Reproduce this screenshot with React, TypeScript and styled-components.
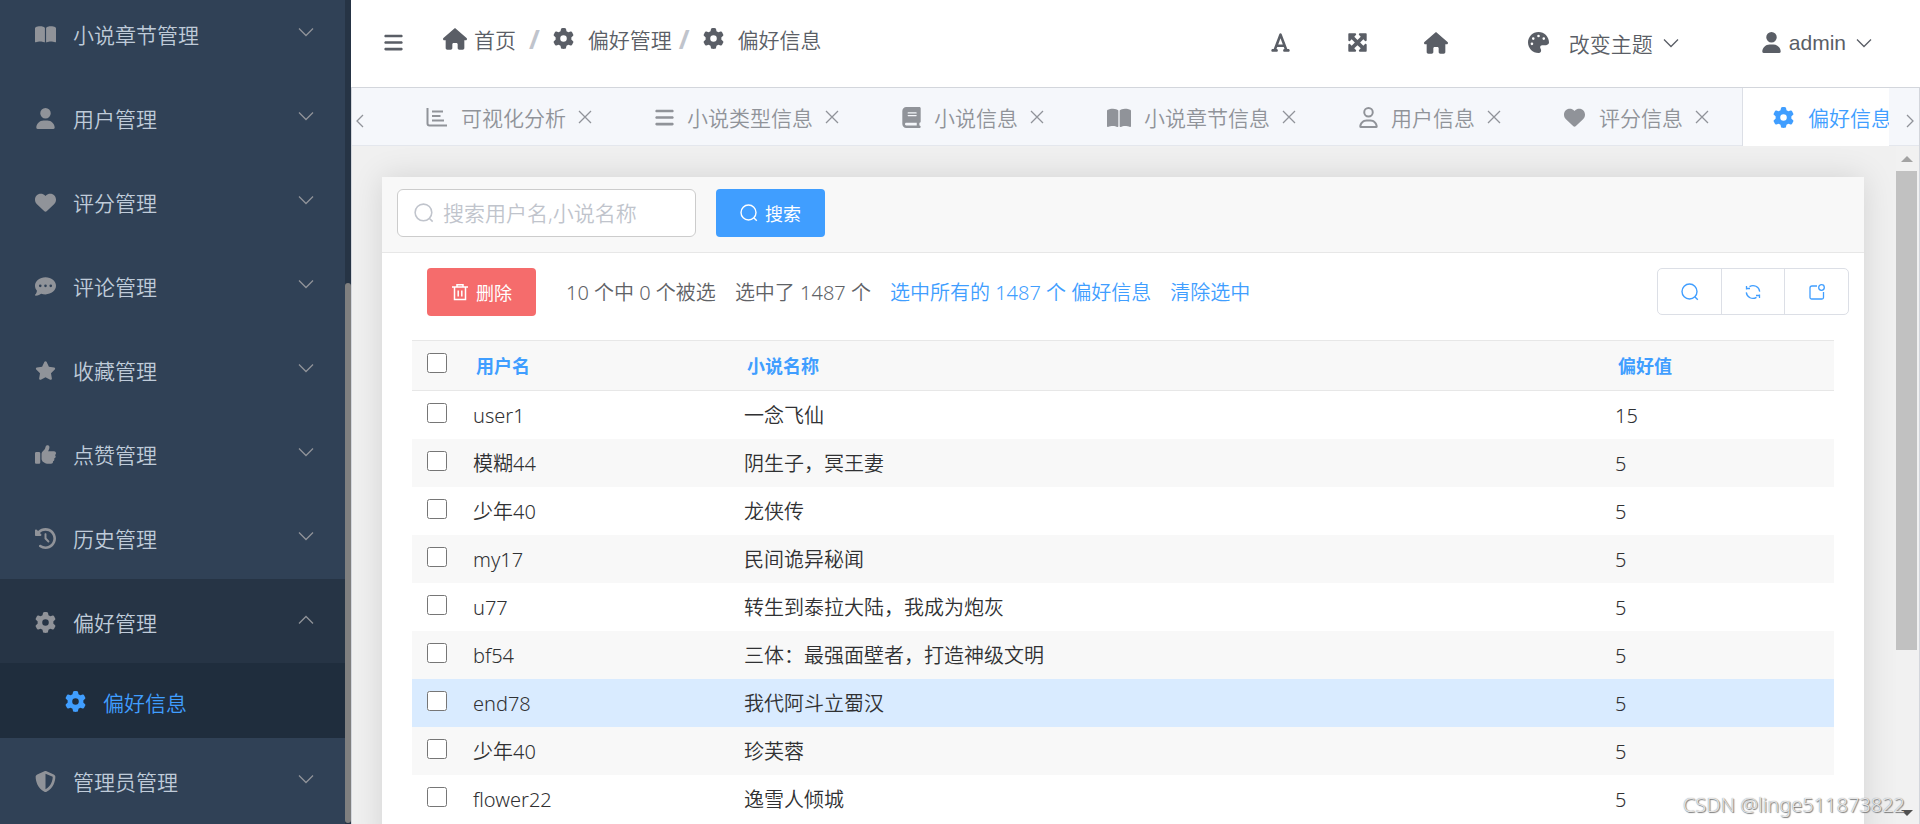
import React from 'react';
import styled, { createGlobalStyle, css } from 'styled-components';
import {
  FaBars, FaBook, FaBookOpen, FaClockRotateLeft, FaCommentDots, FaFont, FaGear, FaHeart,
  FaHouse, FaMaximize, FaPalette, FaRegUser, FaShieldHalved, FaStar, FaThumbsUp, FaUser,
} from 'react-icons/fa6';

const sans = '"Liberation Sans", "Noto Sans CJK SC", sans-serif';
const ui = '"Noto Sans", "Noto Sans CJK SC", sans-serif';

const Global = createGlobalStyle`
  *, *::before, *::after { box-sizing: border-box; }
  body { margin: 0; overflow: hidden; font-family: ${sans}; font-weight: 350; }
  button, input { font: inherit; margin: 0; }
  a { color: inherit; text-decoration: none; }
  svg { display: block; flex: none; }
`;

const Shell = styled.div`
  display: flex;
  height: 100vh;
  overflow: hidden;
`;

/* Sidebar */
const Sidebar = styled.aside`
  display: flex;
  flex: none;
  width: 351px;
  background: #304156;
`;
const Menu = styled.nav`
  flex: 1;
  height: 100vh;
  overflow: hidden;
`;
const MenuList = styled.div`
  margin-top: -9px;
`;
const MenuItem = styled.button<{ $open?: boolean }>`
  display: flex;
  align-items: center;
  width: 100%;
  height: 84px;
  padding: 2px 29px 0 30px;
  border: 0;
  background: ${p => (p.$open ? '#263445' : 'transparent')};
  color: #bfcbd9;
  font-size: 21px;
  text-align: left;
  cursor: pointer;
`;
const MenuIcon = styled.span`
  display: flex;
  justify-content: center;
  width: 30px;
  margin-right: 13px;
  color: #909399;
  font-size: 21px;
`;
const MenuArrow = styled.span`
  margin-left: auto;
  padding-bottom: 4px;
  color: #909399;
`;
const SubItem = styled.a`
  display: flex;
  align-items: center;
  height: 75px;
  padding: 2px 0 0 60px;
  background: #1f2d3d;
  color: #409eff;
  font-size: 21px;
  ${MenuIcon} { color: inherit; }
`;
const SideTrack = styled.div`
  display: flex;
  flex-direction: column;
  justify-content: flex-end;
  width: 6px;
  padding-bottom: 1px;
  background: #263445;
`;
const SideThumb = styled.div`
  height: 65.6%;
  border-radius: 3px;
  background: #7f7f7f;
`;

/* Header */
const Main = styled.div`
  display: flex;
  flex: 1;
  flex-direction: column;
  min-width: 0;
`;
const TopBar = styled.header`
  display: flex;
  flex: none;
  align-items: center;
  height: 87px;
  padding: 0 46px 2px 32px;
  background: #fff;
  color: #5a5e66;
  font-size: 21px;
`;
const IconButton = styled.button`
  display: flex;
  padding: 0;
  border: 0;
  background: none;
  color: inherit;
  cursor: pointer;
`;
const Crumbs = styled.nav`
  display: flex;
  align-items: center;
  height: 32px;
  margin: 0 0 8px 39px;
`;
const Crumb = styled.a<{ $gap: number }>`
  display: flex;
  align-items: center;
  gap: ${p => p.$gap}px;
`;
const Slash = styled.span<{ $before: number }>`
  margin: 0 13px 0 ${p => p.$before}px;
  color: #c0c4cc;
  font-family: ${ui};
  font-weight: 700;
  font-size: 26px;
`;
const Tools = styled.div`
  display: flex;
  align-items: center;
  margin-left: auto;
`;
const ToolIcons = styled.div`
  display: flex;
  align-items: center;
  gap: 56px;
`;
const Dropdown = styled.button<{ $gap: number }>`
  display: flex;
  align-items: center;
  gap: ${p => p.$gap}px;
  margin-left: 80px;
  padding: 0;
  border: 0;
  background: none;
  color: inherit;
  cursor: pointer;
`;
const DropdownLabel = styled.span`
  display: flex;
  align-items: center;
  gap: 8px;
`;

/* Tabs */
const TabFrame = styled.section`
  display: flex;
  flex: 1;
  flex-direction: column;
  min-height: 0;
  border: solid #d3d6dc;
  border-width: 1px 1px 0 1px;
`;
const TabBar = styled.div`
  display: flex;
  flex: none;
  height: 58px;
  border-bottom: 1px solid #e4e7ed;
  background: #f5f7fb;
  color: #909399;
`;
const TabScroll = styled.button`
  display: flex;
  flex: none;
  align-items: center;
  justify-content: center;
  width: 30px;
  padding: 8px 14px 0 0;
  border: 0;
  background: none;
  color: inherit;
  &:last-child { padding: 8px 0 0 11px; }
`;
const TabWindow = styled.div`
  display: flex;
  flex: 1;
  min-width: 0;
  height: 59px;
  padding-left: 14px;
  overflow: hidden;
`;
const Tab = styled.div<{ $active?: boolean }>`
  display: flex;
  flex: none;
  align-items: center;
  padding: 0 30px 2px;
  font-size: 21px;
  ${p => p.$active && css`
    border-left: 1px solid #dcdfe6;
    background: #fff;
    color: #409eff;
  `}
`;
const TabLink = styled.a`
  display: flex;
  align-items: center;
  gap: 14px;
  white-space: nowrap;
`;
const TabClose = styled.button`
  display: flex;
  justify-content: center;
  width: 21px;
  margin-left: 8px;
  padding: 0;
  border: 0;
  background: none;
  color: inherit;
`;

/* Content */
const Content = styled.div`
  display: flex;
  flex: 1;
  min-height: 0;
  background: #f0f0f0;
`;
const Scroller = styled.div`
  flex: 1;
  min-width: 0;
  padding: 31px 32px 0 30px;
  overflow: hidden;
`;
const Card = styled.main`
  background: #fff;
  box-shadow: 0 0 30px rgba(0, 0, 0, 0.12);
  font-family: ${ui};
`;
const SearchBar = styled.form`
  display: flex;
  gap: 20px;
  padding: 12px 15px 15px;
  border-bottom: 1px solid #e7e7e7;
  background: #f8f8f8;
`;
const SearchField = styled.label`
  display: flex;
  align-items: center;
  gap: 9px;
  width: 299px;
  height: 48px;
  padding: 0 16px;
  border: 1px solid #ccc;
  border-radius: 6px;
  background: #fff;
  color: #c0c4cc;
`;
const SearchInput = styled.input`
  flex: 1;
  min-width: 0;
  padding: 0;
  border: 0;
  outline: 0;
  background: none;
  color: #606266;
  font-size: 21px;
  &::placeholder { color: #c0c4cc; opacity: 1; }
`;
const SolidButton = styled.button<{ $tone: string }>`
  display: flex;
  align-items: center;
  justify-content: center;
  gap: 7px;
  width: 109px;
  height: 48px;
  padding: 0;
  border: 0;
  border-radius: 4px;
  background: ${p => p.$tone};
  color: #fff;
  font-size: 18px;
  font-weight: 400;
  cursor: pointer;
`;
const ActionBar = styled.div`
  display: flex;
  align-items: center;
  gap: 24px;
  padding: 15px 15px 24px 45px;
  color: #606266;
  font-size: 20px;
`;
const Counts = styled.div`
  display: flex;
  gap: 19px;
  padding: 0 0 2px 6px;
  white-space: nowrap;
`;
const ActionLink = styled.a`
  color: #409eff;
`;
const ToolGroup = styled.div`
  display: flex;
  align-self: flex-start;
  height: 47px;
  margin-left: auto;
  border: 1px solid #dcdfe6;
  border-radius: 5px;
`;
const ToolButton = styled.button`
  display: flex;
  align-items: center;
  justify-content: center;
  width: 63px;
  padding: 0;
  border: 0;
  background: none;
  color: #409eff;
  & + & { border-left: 1px solid #dcdfe6; }
  &:last-child { width: 64px; }
`;

/* Table */
const TableWrap = styled.div`
  padding: 0 30px 30px;
`;
const Table = styled.table`
  width: 100%;
  table-layout: fixed;
  border-collapse: separate;
  border-spacing: 0;
  color: #303133;
  font-size: 20px;
`;
const Col = styled.col<{ $width?: number }>`
  width: ${p => (p.$width ? `${p.$width}px` : 'auto')};
`;
const HeadCell = styled.th`
  height: 51px;
  padding: 0 0 2px 15px;
  border: solid #e7e7e7;
  border-width: 1px 0;
  background: #f8f8f8;
  color: #409eff;
  font-size: 18px;
  font-weight: 700;
  text-align: left;
  &:first-child { padding: 0 0 0 15px; }
`;
const Cell = styled.td`
  height: 48px;
  padding: 2px 0 0 12px;
  line-height: 28px;
  &:first-child { padding: 0 0 0 15px; }
`;
const Row = styled.tr<{ $hover?: boolean }>`
  background: ${p => (p.$hover ? '#d9ebff' : '#fff')};
  &:nth-child(even) { background: #f8f8f8; }
`;
const Check = styled.input`
  display: block;
  width: 20px;
  height: 20px;
  margin-bottom: 5px;
`;

/* Page scrollbar */
const PageTrack = styled.div`
  display: flex;
  flex: none;
  flex-direction: column;
  align-items: center;
  width: 23px;
  padding: 10px 2px 8px 0;
  background: #f1f1f1;
`;
const ThumbArea = styled.div`
  flex: 1;
  width: 100%;
  margin: 9px 0;
`;
const PageThumb = styled.div`
  height: 76%;
  background: #c1c1c1;
`;
const Watermark = styled.div`
  position: absolute;
  right: 15px;
  bottom: 6px;
  color: rgba(255, 255, 255, 0.8);
  font-family: ${ui};
  font-size: 20px;
  text-shadow: 1px 1px 1px #777, 0 0 1px #777;
`;

type LineProps = { size?: number; width?: number; d: string; stroke?: number };
const Line = ({ size = 24, width = 24, d, stroke = 1 }: LineProps) => (
  <svg width={width} height={width} viewBox={`0 0 ${size} ${size}`} fill="none" stroke="currentColor" strokeWidth={stroke} aria-hidden>
    <path d={d} />
  </svg>
);
const Down = () => <Line size={20} width={20} d="M3 6.5 10 13.500l7-7" stroke={1.3} />;
const Up = () => <Line size={20} width={20} d="M3 13.500 10 6.500l7 7" stroke={1.3} />;
const Close = () => <Line size={14} width={14} d="M1 1l12 12M13 1 1 13" stroke={1.3} />;
const Search = ({ width = 18 }: { width?: number }) => (
  <Line size={18} width={width} d="M16 8.500a7.500 7.500 0 1 1-15 0a7.500 7.500 0 0 1 15 0M14 14l2.800 2.800" stroke={1.4} />
);
const Trash = () => <Line size={18} width={18} d="M1 4h16M6 4V1.800h6V4M3.500 4v12.500h11V4M7.200 7.500v6M10.800 7.500v6" stroke={1.5} />;
const Refresh = () => (
  <Line size={18} width={18} d="M2.500 6.500V3M2 5.500h4M5.500 3.600A6.700 6.700 0 0 1 15.700 8.600M15.500 11.500V15M16 12.500h-4M12.500 14.400A6.700 6.700 0 0 1 2.300 9.400" stroke={1.3} />
);
const Popout = () => (
  <Line size={18} width={18} d="M9 3H4Q2 3 2 5v9.500q0 1.500 1.500 1.500H14q1.500 0 1.500-1.500V9M16.300 4.500a2.800 2.800 0 1 1-5.600 0a2.800 2.800 0 0 1 5.600 0" stroke={1.3} />
);
const BarChart = () => (
  <Line size={22} width={22} d="M1.500 1v15.500q0 2 2 2H21M6 4.500h11M6 9h8.500M6 13.500h12" stroke={2} />
);
const Triangle = ({ up }: { up?: boolean }) => (
  <svg width="12" height="6" viewBox="0 0 12 6" fill={up ? '#a3a3a3' : '#505050'} aria-hidden>
    <path d={up ? 'M0 6 6 0l6 6z' : 'M0 0h12L6 6z'} />
  </svg>
);

const menu = [
  { label: '小说章节管理', icon: <FaBookOpen /> },
  { label: '用户管理', icon: <FaUser /> },
  { label: '评分管理', icon: <FaHeart /> },
  { label: '评论管理', icon: <FaCommentDots /> },
  { label: '收藏管理', icon: <FaStar /> },
  { label: '点赞管理', icon: <FaThumbsUp /> },
  { label: '历史管理', icon: <FaClockRotateLeft /> },
  { label: '偏好管理', icon: <FaGear />, child: '偏好信息' },
  { label: '管理员管理', icon: <FaShieldHalved /> },
];

const GlyphBox = styled.span<{ $w: number }>`
  display: flex;
  justify-content: center;
  width: ${p => p.$w}px;
  padding-top: 2px;
`;

const tabs = [
  { label: '可视化分析', icon: <BarChart />, w: 21 },
  { label: '小说类型信息', icon: <FaBars />, w: 18 },
  { label: '小说信息', icon: <FaBook />, w: 18 },
  { label: '小说章节信息', icon: <FaBookOpen size={24} />, w: 23 },
  { label: '用户信息', icon: <FaRegUser />, w: 18 },
  { label: '评分信息', icon: <FaHeart />, w: 21 },
  { label: '偏好信息', icon: <FaGear />, w: 21, active: true },
];

const rows = [
  ['user1', '一念飞仙', '15'],
  ['模糊44', '阴生子，冥王妻', '5'],
  ['少年40', '龙侠传', '5'],
  ['my17', '民间诡异秘闻', '5'],
  ['u77', '转生到泰拉大陆，我成为炮灰', '5'],
  ['bf54', '三体：最强面壁者，打造神级文明', '5'],
  ['end78', '我代阿斗立蜀汉', '5'],
  ['少年40', '珍芙蓉', '5'],
  ['flower22', '逸雪人倾城', '5'],
];

export default function App() {
  return (
    <Shell>
      <Global />
      <Sidebar>
        <Menu>
          <MenuList>
            {menu.map(m => (
              <React.Fragment key={m.label}>
                <MenuItem $open={!!m.child}>
                  <MenuIcon>{m.icon}</MenuIcon>
                  {m.label}
                  <MenuArrow>{m.child ? <Up /> : <Down />}</MenuArrow>
                </MenuItem>
                {m.child && (
                  <SubItem href="#">
                    <MenuIcon>{m.icon}</MenuIcon>
                    {m.child}
                  </SubItem>
                )}
              </React.Fragment>
            ))}
          </MenuList>
        </Menu>
        <SideTrack><SideThumb /></SideTrack>
      </Sidebar>

      <Main>
        <TopBar>
          <IconButton aria-label="menu"><FaBars /></IconButton>
          <Crumbs>
            <Crumb href="#" $gap={7}><FaHouse size={24} />首页</Crumb>
            <Slash $before={13}>/</Slash>
            <Crumb href="#" $gap={14}><FaGear />偏好管理</Crumb>
            <Slash $before={7}>/</Slash>
            <Crumb href="#" $gap={14}><FaGear />偏好信息</Crumb>
          </Crumbs>
          <Tools>
            <ToolIcons>
              <IconButton aria-label="font"><FaFont /></IconButton>
              <IconButton aria-label="fullscreen"><FaMaximize /></IconButton>
              <IconButton aria-label="home"><FaHouse size={24} /></IconButton>
            </ToolIcons>
            <Dropdown $gap={20}>
              <FaPalette />
              <DropdownLabel>改变主题<Down /></DropdownLabel>
            </Dropdown>
            <Dropdown $gap={7}>
              <FaUser />
              <DropdownLabel>admin<Down /></DropdownLabel>
            </Dropdown>
          </Tools>
        </TopBar>

        <TabFrame>
          <TabBar>
            <TabScroll aria-label="previous"><Line size={16} width={16} d="M11 2 5 8l6 6" stroke={1.3} /></TabScroll>
            <TabWindow>
              {tabs.map(t => (
                <Tab key={t.label} $active={t.active}>
                  <TabLink href="#"><GlyphBox $w={t.w}>{t.icon}</GlyphBox>{t.label}</TabLink>
                  <TabClose aria-label="close"><Close /></TabClose>
                </Tab>
              ))}
            </TabWindow>
            <TabScroll aria-label="next"><Line size={16} width={16} d="M5 2l6 6-6 6" stroke={1.3} /></TabScroll>
          </TabBar>

          <Content>
            <Scroller>
              <Card>
                <SearchBar>
                  <SearchField>
                    <Search width={20} />
                    <SearchInput placeholder="搜索用户名,小说名称" aria-label="搜索用户名,小说名称" />
                  </SearchField>
                  <SolidButton type="button" $tone="#409eff"><Search />搜索</SolidButton>
                </SearchBar>
                <ActionBar>
                  <SolidButton type="button" $tone="#f56c6c"><Trash />删除</SolidButton>
                  <Counts>
                    <span>10 个中 0 个被选</span>
                    <span>选中了 1487 个</span>
                    <ActionLink href="#">选中所有的 1487 个 偏好信息</ActionLink>
                    <ActionLink href="#">清除选中</ActionLink>
                  </Counts>
                  <ToolGroup>
                    <ToolButton aria-label="search"><Search /></ToolButton>
                    <ToolButton aria-label="refresh"><Refresh /></ToolButton>
                    <ToolButton aria-label="open"><Popout /></ToolButton>
                  </ToolGroup>
                </ActionBar>
                <TableWrap>
                  <Table>
                    <colgroup>
                      <Col $width={49} /><Col $width={271} /><Col /><Col $width={231} />
                    </colgroup>
                    <thead>
                      <tr>
                        <HeadCell><Check type="checkbox" aria-label="全选" /></HeadCell>
                        <HeadCell>用户名</HeadCell>
                        <HeadCell>小说名称</HeadCell>
                        <HeadCell>偏好值</HeadCell>
                      </tr>
                    </thead>
                    <tbody>
                      {rows.map(([user, name, value]) => (
                        <Row key={name} $hover={user === 'end78'}>
                          <Cell><Check type="checkbox" aria-label={name} /></Cell>
                          <Cell>{user}</Cell>
                          <Cell>{name}</Cell>
                          <Cell>{value}</Cell>
                        </Row>
                      ))}
                    </tbody>
                  </Table>
                </TableWrap>
              </Card>
            </Scroller>
            <PageTrack>
              <Triangle up />
              <ThumbArea><PageThumb /></ThumbArea>
              <Triangle />
            </PageTrack>
          </Content>
        </TabFrame>
      </Main>
      <Watermark>CSDN @linge511873822</Watermark>
    </Shell>
  );
}
